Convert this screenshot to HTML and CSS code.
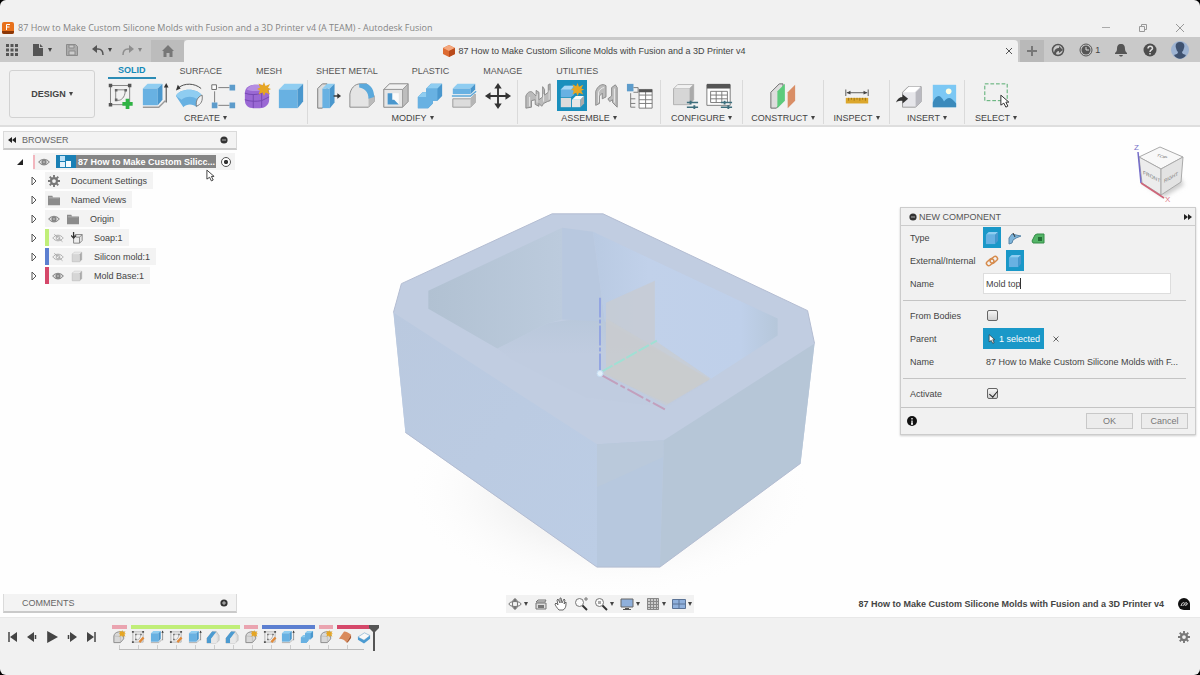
FILE: index.html
```html
<!DOCTYPE html>
<html lang="en">
<head>
<meta charset="utf-8">
<title>Autodesk Fusion</title>
<link rel="stylesheet" href="styles.css">
</head>
<body>
<svg class="defs" aria-hidden="true">
  <symbol id="cube" viewBox="0 0 30 30"><path d="m2 8 6-6h20l-6 6z" fill="#8fcdf1"/><path d="M2 8h20v20H2z" fill="#68b1e2"/><path d="m22 8 6-6v19l-6 7z" fill="#4a97cd"/></symbol>
  <symbol id="graycube" viewBox="0 0 30 30"><path d="m3 8 5-5h19l-5 5z" fill="#f1f1f1" stroke="#b0b0b0"/><path d="M3 8h19v19H3z" fill="#d6d6d6"/><path d="m22 8 5-5v18l-5 6z" fill="#aaa"/><path d="M3 8v19h19l5-6V3" fill="none" stroke="#aaa"/></symbol>
  <symbol id="sketch" viewBox="0 0 30 30"><path d="M4 4h22v22H4z" fill="none" stroke="#777"/><path d="M2 2h4v4H2zM24 2h4v4h-4zM2 24h4v4H2z" fill="#555"/><path d="M10 9v12h4c4-1 7-5 7-12z" fill="none" stroke="#777"/><path d="M9 8h3v3H9zM20 8h3v3h-3zM9 19h3v3H9z" fill="#666"/></symbol>
  <symbol id="extrude" viewBox="0 0 30 30"><path d="M2 27h17l7-7" fill="none" stroke="#999" stroke-width="1.500"/><path d="m2 7 5-5h16l-5 5z" fill="#8fcdf1"/><path d="M2 7h16v18H2z" fill="#68b1e2"/><path d="m18 7 5-5v17l-5 6z" fill="#4a97cd"/><path d="M27 22V4" stroke="#333"/><path d="m27 1 2.500 5h-5z" fill="#333"/></symbol>
  <symbol id="star" viewBox="0 0 14 14"><path d="m7 0 1.500 4L13 2l-2 4 3 1-3 1.500 2 4-4.500-2L7 14l-1.500-3.500-4 2 1.500-4-3-1.500 3-1.500L1.500 1.500l4 2z" fill="#e6a623"/></symbol>
  <symbol id="combine" viewBox="0 0 30 30"><path d="m11 7 5-5h12v13l-5 5h-5v3l-5 5H2V16l5-5h4z" fill="#4a97cd"/><path d="M11 7h12v13h-5v3l-5 5H2V16h9z" fill="#68b1e2"/><path d="m11 7 5-5h12l-5 5zm-9 9 5-5h4v5z" fill="#8fcdf1"/></symbol>
  <symbol id="newcomp" viewBox="0 0 30 30"><path d="M4 13c1-5 4-8 10-9h11v15l-7 8H4z" fill="#d8d8d8" stroke="#888" stroke-width="2"/><path d="m4 13 14 1v13m0-13 7-8" fill="none" stroke="#aaa"/><use href="#star" x="14" y="0" width="16" height="16"/></symbol>
  <symbol id="fillet" viewBox="0 0 30 30"><path d="M2 27V13C3 7 7 2 13 2h7l8 13v6l-6 6z" fill="#e4e4e4" stroke="#888"/><path d="m22 27 6-6v-7l-6 3z" fill="#bbb"/><path d="M12 2h8c5 2 8 7 8 14l-6 2C22 11 18 7 12 6z" fill="#5aa9dc"/></symbol>
  <symbol id="eye" viewBox="0 0 16 12"><path d="M1 6c4-5 10-5 14 0-4 5-10 5-14 0z" fill="#eee" stroke="#8a8a8a" stroke-width="1.500"/><circle cx="8" cy="6" r="3.500" fill="#858585"/><circle cx="8" cy="6" r="1" fill="#ddd"/></symbol>
  <symbol id="eyeoff" viewBox="0 0 16 12"><path d="M1 6c4-5 10-5 14 0-4 5-10 5-14 0z" fill="none" stroke="#999"/><circle cx="8" cy="6" r="2.500" fill="none" stroke="#999"/><path d="m3 1 11 10" stroke="#999"/></symbol>
  <symbol id="folder" viewBox="0 0 14 12"><path d="M0 1h5l1 2h8v9H0z" fill="#8c8c8c"/><path d="M1 3.500h12" stroke="#bbb"/></symbol>
  <symbol id="gear" viewBox="0 0 16 16"><circle cx="8" cy="8" r="4" fill="none" stroke="#777" stroke-width="3"/><path d="M8 0v3M8 13v3M0 8h3M13 8h3M2.300 2.300l2.200 2.200M11.500 11.500l2.200 2.200M2.300 13.700l2.200-2.200M11.500 4.500l2.200-2.200" stroke="#777" stroke-width="2.500"/></symbol>
  <symbol id="cursor" viewBox="0 0 10 14"><path d="M1 1v10l3-2 2 4 2-1-2-4h3z" fill="#fff" stroke="#333"/></symbol>
  <symbol id="minus" viewBox="0 0 10 10"><circle cx="5" cy="5" r="4.500" fill="#333"/><path d="M2.500 5h5" stroke="#ccc"/></symbol>
  <symbol id="tri" viewBox="0 0 8 10"><path d="M2 1v8l4-4z" fill="#fff" stroke="#555"/></symbol>
  <symbol id="rewind" viewBox="0 0 8 6"><path d="M4 0v6L0 3zM8 0v6L4 3z" fill="#222"/></symbol>
</svg>

<div class="app">
  <header class="titlebar">
    <svg class="i12" viewBox="0 0 12 12"><rect width="12" height="12" rx="2" fill="#e8711c"/><path d="M0 9h12v1a2 2 0 0 1-2 2H2a2 2 0 0 1-2-2z" fill="#8a3708"/><path d="M4.500 8V2.500H8M4.500 5h3" stroke="#fff" fill="none"/></svg>
    <span class="window-title">87 How to Make Custom Silicone Molds with Fusion and a 3D Printer v4 (A TEAM) - Autodesk Fusion</span>
    <div class="window-buttons">
      <button aria-label="Minimize"><svg class="i10" viewBox="0 0 10 10"><path d="M1 4.500h8" stroke="#aaa"/></svg></button>
      <button aria-label="Restore"><svg class="i10" viewBox="0 0 10 10"><path d="M1.500 3.500h5v5h-5zM3.500 3V1.500h5v5H7" fill="none" stroke="#999"/></svg></button>
      <button aria-label="Close window"><svg class="i10" viewBox="0 0 10 10"><path d="m1 1 8 8m0-8L1 9" stroke="#999"/></svg></button>
    </div>
  </header>

  <div class="tabbar">
    <div class="quick">
      <button aria-label="Data panel"><svg class="i12" viewBox="0 0 12 12"><path d="M0 0h3v3H0zM4.500 0h3v3h-3zM9 0h3v3H9zM0 4.500h3v3H0zM4.500 4.500h3v3h-3zM9 4.500h3v3H9zM0 9h3v3H0zM4.500 9h3v3h-3zM9 9h3v3H9z" fill="#555"/></svg></button>
      <button aria-label="File"><svg class="i12" viewBox="0 0 12 12"><path d="M1 0h6v4h4v8H1z" fill="#555"/><path d="m8 0 3 3H8z" fill="#555"/></svg><i class="arrow"></i></button>
      <button aria-label="Save"><svg class="i12" viewBox="0 0 12 12"><path d="M.5.5h9l2 2v9H.5z" fill="#aaa" stroke="#8b8b8b"/><path d="M3 1h5v3H3zM3 7h6v4H3z" fill="#ccc" stroke="#8b8b8b"/></svg></button>
      <button aria-label="Undo"><svg class="i12" viewBox="0 0 12 12"><path d="M11 11c0-4-2-6-5-6H3" fill="none" stroke="#555" stroke-width="1.500"/><path d="M5 1v8L0 5z" fill="#555"/></svg><i class="arrow"></i></button>
      <button class="faded" aria-label="Redo"><svg class="i12" viewBox="0 0 12 12"><path d="M1 11c0-4 2-6 5-6h3" fill="none" stroke="#555" stroke-width="1.500"/><path d="M7 1v8l5-4z" fill="#555"/></svg><i class="arrow"></i></button>
    </div>
    <button class="home" aria-label="Home"><svg class="i12" viewBox="0 0 12 12"><path d="m6 0 6 6h-1.500v6h-3V8h-3v4h-3V6H0z" fill="#777"/></svg></button>
    <div class="file-tab">
      <span class="file-name"><svg class="i12" viewBox="0 0 12 12"><path d="m6 0 6 3v6l-6 3-6-3V3z" fill="#dd6b32"/><path d="m6 0 6 3-6 3-6-3z" fill="#f4a77d"/><path d="m6 6 6-3v6l-6 3z" fill="#b94b1c"/></svg>87 How to Make Custom Silicone Molds with Fusion and a 3D Printer v4</span>
      <button aria-label="Close tab"><svg class="i8" viewBox="0 0 8 8"><path d="m1 1 6 6m0-6L1 7" stroke="#555"/></svg></button>
    </div>
    <button class="new-tab" aria-label="New tab"><svg class="i10" viewBox="0 0 10 10"><path d="M5 0v10M0 5h10" stroke="#777" stroke-width="2"/></svg></button>
    <div class="account">
      <button aria-label="Extensions"><svg class="i14" viewBox="0 0 14 14"><circle cx="7" cy="7" r="5.500" fill="none" stroke="#555" stroke-width="1.500"/><path d="M3 11c0-4 2-6 5-6V3l4 4-4 3V8c-2 0-3 1-3 4z" fill="#555"/></svg></button>
      <button class="jobs" aria-label="Job status"><svg class="i14" viewBox="0 0 14 14"><circle cx="7" cy="7" r="6" fill="none" stroke="#555"/><circle cx="7" cy="7" r="4.500" fill="#555"/><path d="M7 4v3h3" fill="none" stroke="#ddd"/></svg>1</button>
      <button aria-label="Notifications"><svg class="i14" viewBox="0 0 14 14"><path d="M7 1c3 0 4 2 4 5 0 2 1 3 2 4v1H1v-1c1-1 2-2 2-4 0-3 1-5 4-5zM5 12h4c-1 2-3 2-4 0z" fill="#555"/></svg></button>
      <button aria-label="Help"><svg class="i14" viewBox="0 0 14 14"><circle cx="7" cy="7" r="6.500" fill="#4d4d4d"/><path d="M5 5.500c0-3 4.500-3 4.500 0C9.500 7 7 7 7 9m0 1v1.500" fill="none" stroke="#ddd" stroke-width="1.500"/></svg></button>
      <button aria-label="Profile"><svg class="i18" viewBox="0 0 18 18"><circle cx="9" cy="9" r="9" fill="#9db3d2"/><path d="M9 1c4 0 5 3 4 6-.5 2-1 3-2 4 0 2 2 2 4 3-3 5-9 5-12 0 2-1 4-1 4-3-1-1-1.500-2-2-4C4 4 5 1 9 1z" fill="#3f5270"/></svg></button>
    </div>
  </div>

  <div class="ribbon">
    <button class="workspace">DESIGN <i class="arrow"></i></button>
    <div class="tools">
      <nav class="tabs">
        <button class="on">SOLID</button><button>SURFACE</button><button>MESH</button><button>SHEET METAL</button><button>PLASTIC</button><button>MANAGE</button><button>UTILITIES</button>
      </nav>
      <div class="groups">
        <section class="group">
          <div class="icons">
            <button aria-label="Create Sketch"><svg viewBox="0 0 30 30"><use href="#sketch" width="28" height="28"/><path d="M22 18v11M16.500 23.500h11" stroke="#2fb344" stroke-width="4"/></svg></button>
            <button aria-label="Extrude"><svg><use href="#extrude"/></svg></button>
            <button aria-label="Revolve"><svg viewBox="0 0 30 30"><path d="M1 15c4-9 24-9 28 0l-6 12c-3-4-11-4-14 0z" fill="#68b1e2"/><path d="M1 15c4-9 24-9 28 0l-6 3c-4-3-12-3-16 1z" fill="#8fcdf1"/><path d="M29 14c1 6-1 10-6 12-1-5 1-10 6-12z" fill="#f2f2f2" stroke="#777"/><path d="M4 6c6-5 17-5 24 1" fill="none" stroke="#444"/><path d="m1 9 2-6 3 4z" fill="#333"/></svg></button>
            <button aria-label="Pattern"><svg viewBox="0 0 30 30"><path d="M10 6h12M6 10v12M10 25h12" stroke="#777"/><path d="M3 3h5v5H3z" fill="#fff" stroke="#666"/><path d="M22 3h6v6h-6zM3 22h6v6H3zM22 22h6v6h-6z" fill="#5d9ccb"/></svg></button>
            <button aria-label="Create Form"><svg viewBox="0 0 30 30"><path d="M2 12c0-5 4-9 10-9h8c6 1 8 4 8 9v7c0 6-5 9-10 9h-6C5 28 2 25 2 19z" fill="#9a68d4"/><path d="M4 8c3-4 6-5 11-5l8 1-4 5c-5 1-11 1-15-1z" fill="#b58ee2"/><path d="M2 12c6 2 12 2 18 0l8-5M2 19c6 2 12 2 18 1l8-4M11 13v15M20 12v15" fill="none" stroke="#7446b0"/><use href="#star" x="15" y="0" width="15" height="15"/></svg></button>
            <button aria-label="Box"><svg><use href="#cube"/></svg></button>
          </div>
          <button class="label">CREATE <i class="arrow"></i></button>
        </section>
        <section class="group">
          <div class="icons">
            <button aria-label="Press Pull"><svg viewBox="0 0 30 30"><path d="m4 7 5-5h5v20l-5 6H4z" fill="#ddd" stroke="#777"/><path d="M9 7h8v21H9z" fill="#68b1e2"/><path d="m9 7 5-5h8l-5 5z" fill="#8fcdf1"/><path d="m17 7 5-5v20l-5 6z" fill="#4a97cd"/><path d="M21 15h5" stroke="#333" stroke-width="1.500"/><path d="m25 12 4 3-4 3z" fill="#333"/></svg></button>
            <button aria-label="Fillet"><svg><use href="#fillet"/></svg></button>
            <button aria-label="Shell"><svg viewBox="0 0 30 30"><path d="m2 8 6-6h20v19l-6 6H2z" fill="#bdbdbd" stroke="#888"/><path d="m2 8 6-6h20l-6 6z" fill="#f1f1f1" stroke="#999"/><path d="M2 8h20v19H2z" fill="#e6e6e6" stroke="#999"/><path d="M6 12h12v12H6z" fill="#fafafa"/><path d="M6 12v12h12l-5-5h-2v-7z" fill="#4a97cd"/></svg></button>
            <button aria-label="Combine"><svg><use href="#combine"/></svg></button>
            <button aria-label="Split Body"><svg viewBox="0 0 30 30"><path d="m3 7 5-5h19l-5 5z" fill="#8fcdf1"/><path d="M3 7h19v6H3z" fill="#68b1e2"/><path d="m22 7 5-5v6l-5 5z" fill="#4a97cd"/><path d="M2 15h20l6-5" stroke="#5aa6d8" stroke-width="1.500" fill="none"/><path d="M3 18h19l5-5v9l-5 5H3z" fill="#dcdcdc" stroke="#999"/><path d="m22 18 5-5v9l-5 5z" fill="#b5b5b5"/></svg></button>
            <button aria-label="Move"><svg viewBox="0 0 30 30"><path d="M15 4v22M4 15h22" stroke="#333" stroke-width="2"/><path d="m15 1 4 6h-8zM15 29l4-6h-8zM1 15l6-4v8zM29 15l-6-4v8z" fill="#333"/></svg></button>
          </div>
          <button class="label">MODIFY <i class="arrow"></i></button>
        </section>
        <section class="group">
          <div class="icons">
            <button aria-label="Joint"><svg viewBox="0 0 30 30"><path d="M2 28V15c2-5 6-6 8-3l3 3V9l3 2v8l4-3V5l2 3v6l4-3V3l2-1v18l-3 1-4 2-2 3-3-3v3l-4-2v-5l-4 1v7z" fill="#bbb" stroke="#888"/><path d="M6 26V16m8-3v9m7-9v8m6-12v10" stroke="#e8e8e8"/></svg></button>
            <button class="active" aria-label="New Component"><svg viewBox="0 0 30 30"><path d="m3 8 4-4h10v10l-3 2H3z" fill="#68b1e2"/><path d="m3 8 4-4h10l-3 4z" fill="#a8d7f5"/><path d="M3 17h11v10H3z" fill="#dcdcdc"/><path d="M15 19h9v8h-9z" fill="#e6e6e6"/><path d="m15 19 4-4h9l-4 4z" fill="#fafafa"/><path d="m24 19 4-4v8l-4 4z" fill="#aaa"/><use href="#star" x="14" y="1" width="14" height="14"/></svg></button>
            <button aria-label="As-built Joint"><svg viewBox="0 0 30 30"><path d="M4 25V10c2-6 7-9 11-6v12l-4 2v-6l-3 3v8zM17 18l4-3V6l4-3 2 3v21l-5-5v-3l-3 2z" fill="#bbb" stroke="#888"/><path d="M7 22V11c1-3 4-5 6-5m11 1v15" fill="none" stroke="#eee"/></svg></button>
            <button aria-label="Bill of materials"><svg viewBox="0 0 30 30"><path d="M1 2h7v8H1z" fill="#5d9ccb"/><path d="M8 6h5v5H8M5 12v15h5m-5-9h5m-5 5h5" fill="none" stroke="#777"/><path d="M14 8h14v20H14zM14 14h14M14 19h14M14 23h14M21 8v20" fill="#fff" stroke="#777"/><path d="M14 8h14v3H14z" fill="#555"/></svg></button>
          </div>
          <button class="label">ASSEMBLE <i class="arrow"></i></button>
        </section>
        <section class="group">
          <div class="icons">
            <button aria-label="Configure"><svg viewBox="0 0 30 30"><use href="#graycube" width="27" height="27"/><path d="M17 22h12m-12 5h12" stroke="#3c6e7c" stroke-width="1.500"/><path d="M21 20v4m4 1v4" stroke="#3c6e7c" stroke-width="2"/></svg></button>
            <button aria-label="Configuration table"><svg viewBox="0 0 30 30"><path d="M2 3h25v22H2z" fill="#fff" stroke="#777"/><path d="M2 2h25v5H2z" fill="#555"/><path d="M6 10h18v12H6zM6 14h18M6 18h18M12 10v12M18 10v12" fill="none" stroke="#777"/><path d="M17 22h12m-12 5h12" stroke="#3c6e7c" stroke-width="1.500"/><path d="M21 20v4m4 1v4" stroke="#3c6e7c" stroke-width="2"/></svg></button>
          </div>
          <button class="label">CONFIGURE <i class="arrow"></i></button>
        </section>
        <section class="group">
          <div class="icons"><button aria-label="Offset Plane"><svg viewBox="0 0 30 30"><path d="m2 11 9-9h4v18l-7 8H2z" fill="#ddd" stroke="#666"/><path d="m9 10 8-8v18l-8 8z" fill="#5ccb7c"/><path d="m20 11 8-8v17l-8 8z" fill="#d98e66"/></svg></button></div>
          <button class="label">CONSTRUCT <i class="arrow"></i></button>
        </section>
        <section class="group">
          <div class="icons"><button aria-label="Measure"><svg viewBox="0 0 30 30"><path d="M3 8v7M27 8v7M4 11.500h22" stroke="#555"/><path d="m4 11.500 4-2v4zM26 11.500l-4-2v4z" fill="#444"/><path d="M3 17h24v6H3z" fill="#dca72c"/><path d="M6 17v3m3-3v2m3-2v3m3-3v2m3-2v3m3-3v2m3-2v3" stroke="#9c7416"/></svg></button></div>
          <button class="label">INSPECT <i class="arrow"></i></button>
        </section>
        <section class="group">
          <div class="icons">
            <button aria-label="Insert Derive"><svg viewBox="0 0 30 30"><path d="m7 11 6-6h14v16l-6 6H7z" fill="#e6e6ea" stroke="#999"/><path d="m21 11 6-6v16l-6 6z" fill="#b9b9c0"/><path d="m8 11 6-6h12l-6 6z" fill="#fff"/><path d="M0 22c1-4 4-6 7-6v-3l6 5-6 5v-3c-3 0-5 0-7 2z" fill="#333"/></svg></button>
            <button aria-label="Insert image"><svg viewBox="0 0 30 30"><path d="M3 3h25v24H3z" fill="#7cc8f4"/><circle cx="20" cy="10" r="3" fill="#fffde0"/><path d="M3 22c4-9 8-9 12-1 4-6 8-5 13 2v4H3z" fill="#3b8abb"/></svg></button>
          </div>
          <button class="label">INSERT <i class="arrow"></i></button>
        </section>
        <section class="group">
          <div class="icons"><button aria-label="Select"><svg viewBox="0 0 30 30"><path d="M3 2h24v18H3z" fill="none" stroke="#4aa866" stroke-dasharray="4 2"/><use href="#cursor" x="19" y="13" width="11" height="15"/></svg></button></div>
          <button class="label">SELECT <i class="arrow"></i></button>
        </section>
      </div>
    </div>
  </div>

  <main class="canvas">
    <svg class="model" viewBox="0 126 1200 491" aria-hidden="true">
      <defs>
        <linearGradient id="gl" x1="0" y1="0" x2="1" y2="1"><stop offset="0" stop-color="#bac9df"/><stop offset="1" stop-color="#bccde5"/></linearGradient>
        <linearGradient id="gw" x1="0" y1="0" x2="1" y2="0"><stop offset="0" stop-color="#b1c1d2"/><stop offset="1" stop-color="#bccbdd"/></linearGradient>
        <linearGradient id="gr" x1="0" y1="0" x2="1" y2="0"><stop offset="0" stop-color="#b9cae2"/><stop offset=".3" stop-color="#c1d1ea"/><stop offset=".8" stop-color="#bfd0ea"/><stop offset="1" stop-color="#b6c7da"/></linearGradient>
        <linearGradient id="gf" x1="0" y1="0" x2="0" y2="1"><stop offset="0" stop-color="#b9c8db"/><stop offset=".4" stop-color="#c0cce0"/></linearGradient>
        <radialGradient id="sh"><stop offset=".5" stop-color="#f4f4f4"/><stop offset="1" stop-color="#fff" stop-opacity="0"/></radialGradient>
      </defs>
      <ellipse cx="610" cy="490" rx="210" ry="110" fill="url(#sh)"/>
      <path d="M552 213h51l205 97 7 33-14 120-141 104h-63L405 432l-12-120 8-29z" fill="#c1cde1"/>
      <path d="m393 312 204 132v123L405 432z" fill="url(#gl)"/>
      <path d="m597 444 67-4-4 127h-63z" fill="#b7c8de"/>
      <path d="m597 444 67-4-1 17-66 30z" fill="#bac9db"/>
      <path d="m664 440 151-97-14 120-141 104z" fill="#b6c6d7"/>
      <path d="m428 290 134-63 31 4 185 87v17l-68 45-44 27-80-10-73-37-85-52z" fill="#c1cde1"/>
      <path d="m497 348 50-25c16-4 36-5 57-4l106 61-44 27-80-10-73-37z" fill="url(#gf)"/>
      <path d="m428 290 134-63v92l-15 4-50 25-69-40z" fill="url(#gw)"/>
      <path d="m562 227 31 4 12 90-43-2z" fill="#b8c8df"/>
      <path d="m593 231 185 87v17l-68 44-105-58z" fill="url(#gr)"/>
      <path d="m606 302 49-22v60l-49 32z" fill="#c7cbd4" opacity=".85"/>
      <path d="m606 318 104 61-44 26-60-32z" fill="#cacccd" opacity=".6"/>
      <path d="m602 373 53-33 56 38-43 25z" fill="#cbccca" opacity=".6"/>
      <path d="m552 213-151 70-8 29M603 213l205 97 7 33M405 432l192 135h63l141-104M552 213h51" fill="none" stroke="#b4bdd2"/>
      <path d="M600 297v73" stroke="#93a5e2" stroke-width="2" stroke-dasharray="20 2 4 2"/>
      <path d="m602 371 55-31" stroke="#a0e0d4" stroke-width="2" stroke-dasharray="12 2"/>
      <path d="m602 375 63 34" stroke="#c2a0bd" stroke-width="2" stroke-dasharray="18 3 5 3"/>
      <circle cx="600" cy="373" r="3" fill="#e2effa" stroke="#c4dcf2"/>
    </svg>

    <div class="workarea">
      <aside class="browser">
        <div class="panel-head"><button aria-label="Collapse browser"><svg class="i8" ><use href="#rewind"/></svg></button><span>BROWSER</span><button aria-label="Hide browser"><svg class="i8"><use href="#minus"/></svg></button></div>
        <ul class="tree">
          <li class="root"><svg class="i8" viewBox="0 0 8 8"><path d="M7 1v6H1z" fill="#222"/></svg>
            <div class="node"><b class="bar pink"></b><svg class="i12"><use href="#eye"/></svg>
              <span class="picked"><svg class="asm" viewBox="0 0 20 13"><path d="M4 1h5v5H4z" fill="#bfe2f8"/><path d="M4 7h5v5H4z" fill="#e2f1fb"/><path d="M10 6h5v6h-5z" fill="#f4fafe"/></svg><strong>87 How to Make Custom Silicc...</strong></span>
              <input type="radio" checked aria-label="Activate component">
              <svg class="pointer"><use href="#cursor"/></svg></div></li>
          <li><svg class="i10"><use href="#tri"/></svg><div class="node plain"><svg class="i12"><use href="#gear"/></svg><span>Document Settings</span></div></li>
          <li><svg class="i10"><use href="#tri"/></svg><div class="node plain"><svg class="i12"><use href="#folder"/></svg><span>Named Views</span></div></li>
          <li><svg class="i10"><use href="#tri"/></svg><div class="node plain"><svg class="i12"><use href="#eye"/></svg><svg class="i12"><use href="#folder"/></svg><span>Origin</span></div></li>
          <li><svg class="i10"><use href="#tri"/></svg><div class="node"><b class="bar lime"></b><svg class="i12"><use href="#eyeoff"/></svg><svg class="i12" viewBox="0 0 14 14"><path d="m3 5 2-2h8v7l-3 3H3zM10 6v7m0-7 3-3M6 6h4" fill="#eee" stroke="#777"/><path d="M3 0v7M0 4l3 3 3-3" fill="none" stroke="#333" stroke-width="1.500"/></svg><span>Soap:1</span></div></li>
          <li><svg class="i10"><use href="#tri"/></svg><div class="node"><b class="bar blue"></b><svg class="i12"><use href="#eyeoff"/></svg><svg class="i12"><use href="#graycube"/></svg><span>Silicon mold:1</span></div></li>
          <li><svg class="i10"><use href="#tri"/></svg><div class="node"><b class="bar red"></b><svg class="i12"><use href="#eye"/></svg><svg class="i12"><use href="#graycube"/></svg><span>Mold Base:1</span></div></li>
        </ul>
      </aside>

      <div class="side">
        <svg class="viewcube" viewBox="0 0 60 66"><defs><filter id="soft"><feGaussianBlur stdDeviation="2"/></filter></defs><path d="m14 46 22 14 20-12-4-8z" fill="#ccc" filter="url(#soft)"/><path d="m11 20 21-10 23 10-22 12z" fill="#f8f8f8" stroke="#aaa"/><path d="m11 20 22 12v26L14 46z" fill="#ececec" stroke="#aaa"/><path d="m33 32 22-12-2 25-20 13z" fill="#e3e3e3" stroke="#aaa"/><path d="m10 15 3 31" stroke="#746cc9" stroke-width="1.500"/><path d="m13 46 23 15" stroke="#cf6478" stroke-width="1.500"/><text x="6" y="13" fill="#7771c8">Z</text><text x="37" y="65" fill="#e0788a">X</text><text class="face" transform="matrix(1 .5 0 1 15 37)">FRONT</text><text class="face" transform="matrix(.9 -.5 0 1 36 46)">RIGHT</text><text class="face" transform="matrix(1 .3 -.5 .6 28 19)">TOP</text></svg>
        <form class="dialog">
          <div class="dialog-head"><svg class="i8"><use href="#minus"/></svg><span>NEW COMPONENT</span><button type="button" aria-label="Dock"><svg class="i8 flip"><use href="#rewind"/></svg></button></div>
          <fieldset>
            <div class="row"><span>Type</span><div class="choices"><button type="button" class="choice on" aria-label="Standard"><svg class="i14"><use href="#cube"/></svg></button><button type="button" class="choice" aria-label="Sheet metal"><svg class="i14" viewBox="0 0 14 14"><path d="M1 13V7l3-4 4 1 5 1-5 2-3 2-1 3z" fill="#7db4da" stroke="#5a86a8"/><path d="m5 2 2 4" stroke="#333"/></svg></button><button type="button" class="choice" aria-label="Electronics"><svg class="i14" viewBox="0 0 14 14"><path d="M1 10 4 4l2-1h7v9H2z" fill="#54b567" stroke="#348d48"/><path d="M7 6h4v4H7z" fill="#246f36"/></svg></button></div></div>
            <div class="row"><span>External/Internal</span><div class="choices"><button type="button" class="choice" aria-label="External"><svg class="i14" viewBox="0 0 14 14"><g fill="none" stroke="#d68b4c" stroke-width="1.500"><rect x="1" y="6" width="8" height="4.500" rx="2" transform="rotate(-40 5 8)"/><rect x="5" y="3.500" width="8" height="4.500" rx="2" transform="rotate(-40 9 6)"/></g></svg></button><button type="button" class="choice on" aria-label="Internal"><svg class="i14"><use href="#cube"/></svg></button></div></div>
            <div class="row"><label for="cname">Name</label><div class="field"><input id="cname" type="text" value="Mold top"></div></div>
          </fieldset>
          <fieldset>
            <div class="row"><label for="bodies">From Bodies</label><input id="bodies" type="checkbox"></div>
            <div class="row"><span>Parent</span><div class="choices"><button type="button" class="selected"><svg class="i10"><use href="#cursor"/></svg>1 selected</button><button type="button" class="clear" aria-label="Clear selection"><svg class="i8" viewBox="0 0 8 8"><path d="m1.500 1.500 5 5m0-5-5 5" stroke="#666"/></svg></button></div></div>
            <div class="row"><span>Name</span><span class="value">87 How to Make Custom Silicone Molds with F...</span></div>
          </fieldset>
          <fieldset>
            <div class="row"><label for="activate">Activate</label><input id="activate" type="checkbox" checked></div>
          </fieldset>
          <div class="dialog-foot"><svg class="i10" viewBox="0 0 10 10"><circle cx="5" cy="5" r="5" fill="#111"/><path d="M5 2v1.500M5 4.500V8M4 8h2" stroke="#fff" stroke-width="1.300"/></svg><button type="submit">OK</button><button type="button">Cancel</button></div>
        </form>
      </div>
    </div>

    <div class="bottom">
      <div class="panel-head comments"><span>COMMENTS</span><button aria-label="Show comments"><svg class="i8" viewBox="0 0 10 10"><circle cx="5" cy="5" r="4.500" fill="#333"/><path d="M2.500 5h5M5 2.500v5" stroke="#ddd"/></svg></button></div>
      <div class="navbar">
        <button aria-label="Orbit"><svg class="i14" viewBox="0 0 14 14"><ellipse cx="7" cy="7" rx="6" ry="2.500" fill="none" stroke="#777"/><ellipse cx="7" cy="7" rx="2.500" ry="5" fill="none" stroke="#777"/><path d="m7 1 2 3H5zM7 13l2-3H5z" fill="#777"/></svg><i class="arrow"></i></button>
        <button aria-label="Look at"><svg class="i14" viewBox="0 0 14 14"><path d="M2 6h10v6H2zM2 5l2-2h8l-1 2z" fill="#ddd" stroke="#777"/><path d="M4 8h6v3H4z" fill="#777"/></svg></button>
        <button aria-label="Pan"><svg class="i14" viewBox="0 0 14 14"><path d="M5 13C3 11 1 8 1 7l1-1 2 2-1-5 1-1 2 4V1h1l1 5 2-4 1 1-1 4 2-2v2c0 3-1 5-3 6z" fill="#fff" stroke="#666"/></svg></button>
        <button aria-label="Zoom"><svg class="i14" viewBox="0 0 14 14"><circle cx="5.500" cy="5.500" r="4" fill="#fafafa" stroke="#777"/><path d="m8.500 8.500 4.500 4.500" stroke="#333" stroke-width="2"/><path d="M10 2h4M12 0v4" stroke="#777"/></svg></button>
        <button aria-label="Fit"><svg class="i14" viewBox="0 0 14 14"><circle cx="5.500" cy="5.500" r="4" fill="#fafafa" stroke="#777"/><path d="m8.500 8.500 4.500 4.500" stroke="#333" stroke-width="2"/><path d="M4 4h3v3H4z" fill="#aaa"/></svg><i class="arrow"></i></button>
        <button aria-label="Display settings"><svg class="i14" viewBox="0 0 14 14"><path d="M1 2h12v8H1z" fill="#8fb0dc" stroke="#666"/><path d="M5 11h4v1h2v1H3v-1h2z" fill="#555"/></svg><i class="arrow"></i></button>
        <button aria-label="Grid and snaps"><svg class="i14" viewBox="0 0 14 14"><path d="M1 1h12v12H1z" fill="#ccc"/><path d="M1.500 1.500h11v11h-11zM1 4.500h12M1 7.500h12M1 10.500h12M4.500 1v12M7.500 1v12M10.500 1v12" fill="none" stroke="#888"/></svg><i class="arrow"></i></button>
        <button aria-label="Viewports"><svg class="i14" viewBox="0 0 14 14"><path d="M.5 2.500h13v9H.5zM7 2v10M1 7h12" fill="#8fb0dc" stroke="#5b7396"/></svg><i class="arrow"></i></button>
      </div>
      <div class="doc-label"><strong>87 How to Make Custom Silicone Molds with Fusion and a 3D Printer v4</strong><svg class="i12" viewBox="0 0 12 12"><path d="M6 0c3 0 6 3 6 6v6H6a6 6 0 0 1 0-12z" fill="#111"/><path d="M3 8c1-3 2-4 3-3s2-1 3 0-1 3-2 2-2 0-2 1" fill="none" stroke="#eee"/></svg></div>
    </div>
  </main>

  <footer class="timeline">
    <div class="playback">
      <button aria-label="Go to start"><svg class="i10" viewBox="0 0 10 10"><path d="M1 0v10" stroke="#444" stroke-width="1.500"/><path d="M9 0v10L2 5z" fill="#444"/></svg></button>
      <button aria-label="Step back"><svg class="i10" viewBox="0 0 10 10"><path d="M7 0v10L0 5z" fill="#444"/><path d="M8.500 3v4" stroke="#444" stroke-width="1.500"/></svg></button>
      <button aria-label="Play"><svg class="i12" viewBox="0 0 10 10"><path d="M1 0v10l9-5z" fill="#444"/></svg></button>
      <button aria-label="Step forward"><svg class="i10" viewBox="0 0 10 10"><path d="M3 0v10l7-5z" fill="#444"/><path d="M1.500 3v4" stroke="#444" stroke-width="1.500"/></svg></button>
      <button aria-label="Go to end"><svg class="i10" viewBox="0 0 10 10"><path d="M9 0v10" stroke="#444" stroke-width="1.500"/><path d="M1 0v10l7-5z" fill="#444"/></svg></button>
    </div>
    <div class="history">
      <b class="rose"></b><b class="lime six"></b><b class="rose"></b><b class="blue three"></b><b class="rose"></b><b class="red two"></b>
      <button aria-label="Component"><svg class="i14"><use href="#newcomp"/></svg></button>
      <button aria-label="Sketch"><svg class="i14" viewBox="0 0 30 30"><use href="#sketch"/><path d="m18 26 9-10" stroke="#e08a3a" stroke-width="5"/></svg></button>
      <button aria-label="Extrude"><svg class="i14"><use href="#extrude"/></svg></button>
      <button aria-label="Sketch"><svg class="i14" viewBox="0 0 30 30"><use href="#sketch"/><path d="m18 26 9-10" stroke="#e08a3a" stroke-width="5"/></svg></button>
      <button aria-label="Extrude"><svg class="i14"><use href="#extrude"/></svg></button>
      <button aria-label="Chamfer"><svg class="i14" viewBox="0 0 30 30"><path d="M2 28V18L14 3h8l6 9v10l-6 6z" fill="#ddd" stroke="#999"/><path d="M2 17 13 3l9 1-11 15v9H2z" fill="#4c9bd1"/><path d="M11 19 20 8l3 5v15H11z" fill="#e8e8e8"/></svg></button>
      <button aria-label="Chamfer"><svg class="i14" viewBox="0 0 30 30"><path d="M2 28V18L14 3h8l6 9v10l-6 6z" fill="#ddd" stroke="#999"/><path d="M2 17 13 3l9 1-11 15v9H2z" fill="#4c9bd1"/><path d="M11 19 20 8l3 5v15H11z" fill="#e8e8e8"/></svg></button>
      <button aria-label="Component"><svg class="i14"><use href="#newcomp"/></svg></button>
      <button aria-label="Sketch"><svg class="i14" viewBox="0 0 30 30"><use href="#sketch"/><path d="m18 26 9-10" stroke="#e08a3a" stroke-width="5"/></svg></button>
      <button aria-label="Extrude"><svg class="i14"><use href="#extrude"/></svg></button>
      <button aria-label="Combine"><svg class="i14"><use href="#combine"/></svg></button>
      <button aria-label="Component"><svg class="i14"><use href="#newcomp"/></svg></button>
      <button aria-label="Plane"><svg class="i14" viewBox="0 0 30 30"><path d="M2 19 13 3c6 0 10 3 15 7l-10 17c-3-5-8-8-16-8z" fill="#d98a5c"/><path d="m18 27 10-17v7l-7 10z" fill="#a95a30"/></svg></button>
      <button aria-label="Shell"><svg class="i14" viewBox="0 0 30 30"><path d="m2 15 14-9 12 6-13 10z" fill="#f8f8f8" stroke="#4c8fc0"/><path d="m2 15 13 7 13-10v7L15 29 2 21z" fill="#4c9bd1"/></svg></button>
      <svg class="marker" viewBox="0 0 10 26"><path d="M0 0h10v3L6 7v19H4V7L0 3z" fill="#555"/></svg>
    </div>
    <button class="settings" aria-label="Timeline settings"><svg class="i12"><use href="#gear"/></svg></button>
  </footer>
</div>
</body>
</html>
```

FILE: styles.css
```css
* { box-sizing: border-box; }
html { background: #000; }
body { margin: 0; font: 9px/12px "Liberation Sans", Arial, sans-serif; color: #444; }
button, input { font: inherit; color: inherit; }
button { display: flex; align-items: center; justify-content: center; margin: 0; padding: 0; border: 0; background: none; white-space: nowrap; }
svg { display: block; flex: none; }
.defs { position: absolute; width: 0; height: 0; }
.i8 { width: 8px; height: 8px; }
.i10 { width: 10px; height: 10px; }
.i12 { width: 12px; height: 12px; }
.i14 { width: 14px; height: 14px; }
.i18 { width: 18px; height: 18px; }
.arrow { flex: none; border: 2px solid transparent; border-top: 4px solid #444; border-bottom: 0; margin-left: 3px; }

.app { display: flex; flex-direction: column; min-height: 100vh; background: #f1f1f1; border-radius: 6px; overflow: hidden; }

/* Title bar */
.titlebar { display: flex; align-items: center; gap: 4px; height: 37px; padding: 18px 15px 0 2px; }
.window-title { font: 9px/14px "Open Sans", "Noto Sans", sans-serif; color: #858585; white-space: nowrap; }
.window-buttons { display: flex; gap: 27px; margin-left: auto; }

/* Document tabs */
.tabbar { display: flex; height: 25px; padding-top: 3px; background: #c9c9c9; }
.quick { display: flex; align-items: center; gap: 14px; width: 151px; padding: 0 0 3px 6px; }
.quick button { gap: 1px; }
.quick .faded { margin-left: -4px; opacity: .5; }
.home { width: 33px; background: #bcbcbc; }
.file-tab { display: flex; flex: 1; align-items: center; padding-right: 5px; background: #f1f1f1; border-radius: 4px 4px 0 0; }
.file-name { display: flex; flex: 1; align-items: center; justify-content: center; gap: 3px; white-space: nowrap; }
.new-tab { width: 24px; margin-left: 2px; background: #b9b9b9; }
.account { display: flex; align-items: center; justify-content: space-between; width: 156px; padding: 0 11px 3px 7px; }
.jobs { gap: 2px; }

/* Ribbon */
.ribbon { display: flex; gap: 9px; height: 65px; padding: 1px 9px 0; border-bottom: 2px solid #dedede; }
.workspace { width: 86px; height: 48px; margin-top: 7px; border: 1px solid #d2d2d2; border-radius: 3px; font-weight: bold; }
.tabs { display: flex; gap: 14px; padding-left: 4px; }
.tabs button { height: 16px; padding: 0 10px; color: #555; }
.tabs .on { color: #1489b8; font-weight: bold; border-bottom: 2px solid #2c8cb5; }
.groups { display: grid; grid-template-columns: 204px 210px 143px 82px 81px 66px 75px 62px; }
.group { display: flex; flex-direction: column; align-items: center; border-right: 1px solid #dadada; margin-top: 1px; }
.group:last-child { border: 0; }
.icons { display: flex; gap: 4px; }
.icons button { width: 30px; height: 31px; }
.icons svg { width: 28px; height: 28px; }
.icons .active { background: #1a8fbd; }
.label { height: 13px; color: #444; }

/* Canvas */
.canvas { position: relative; display: flex; flex: 1; flex-direction: column; justify-content: space-between; background: #fefefe; }
.model { position: absolute; inset: 0; width: 100%; height: 100%; }
.workarea { position: relative; display: flex; justify-content: space-between; padding: 4px 4px 0 3px; }
.browser { width: 234px; }
.panel-head { display: flex; align-items: center; width: 234px; height: 19px; padding: 0 8px 0 4px; border: 1px solid #dadada; border-bottom: 2px solid #cacaca; background: #f3f3f3; color: #666; }
.panel-head span { flex: 1; padding-left: 6px; }
.tree { margin: 2px 0 0; padding: 0; list-style: none; }
.tree li { display: flex; align-items: center; gap: 6px; height: 19px; padding-left: 26px; }
.tree .root { gap: 9px; padding-left: 13px; }
.node { position: relative; display: flex; align-items: center; gap: 7px; height: 17px; padding-right: 6px; background: #f3f3f3; white-space: nowrap; }
.plain { padding-left: 3px; }
.node span { padding-left: 4px; }
.bar { width: 4px; height: 17px; margin-right: -4px; }
.root .node { gap: 4px; padding-right: 4px; }
.root .bar { width: 2px; height: 14px; margin-right: -1px; }
.pink { background: #f2b6be; }
.rose { background: #eaa4b0; }
.lime { background: #c0ee78; }
.blue { background: #5c7fd0; }
.red { background: #d5486a; }
.root .picked { display: flex; align-items: center; height: 13px; padding: 0; margin-left: 2px; background: #858585; color: #fff; }
.asm { width: 20px; height: 13px; background: #1a80b5; }
.picked strong { padding: 0 1px 0 2px; }
.root input { width: 10px; height: 10px; margin: 0 0 0 1px; appearance: none; border: 1px solid #555; border-radius: 50%; background: radial-gradient(#333 30%, #fff 45%); }
.pointer { position: absolute; right: 20px; top: 16px; width: 9px; height: 13px; }

/* View cube and dialog */
.side { display: flex; flex-direction: column; align-items: flex-end; width: 296px; }
.viewcube { width: 60px; height: 66px; margin: 6px 8px 4px 0; font-size: 8px; }
.face { font-size: 5px; fill: #777; }
.dialog { width: 100%; border: 1px solid #ccc; background: #f1f1f1; color: #444; box-shadow: 0 1px 2px #ccc; }
.dialog-head { display: flex; align-items: center; gap: 2px; height: 18px; padding: 0 3px 0 8px; border-bottom: 1px solid #ccc; color: #555; }
.dialog-head span { flex: 1; }
.flip { transform: scaleX(-1); }
fieldset { margin: 0 9px 0 2px; padding: 3px 0 5px 7px; border: 0; border-bottom: 1px solid #c4c4c4; }
fieldset:first-of-type { padding-top: 0; }
fieldset:last-of-type { margin: 0; padding: 3px 0 2px 9px; }
.row { display: grid; grid-template-columns: 73px 1fr; align-items: center; height: 23px; }
.choices { display: flex; gap: 5px; }
.choice { width: 18px; height: 21px; }
.choice.on, .selected { background: #1a98c8; }
.field { position: relative; margin-right: 15px; }
.field input { width: 100%; height: 21px; padding: 0 2px; border: 1px solid #ddd; border-radius: 0; background: #fff; outline: 0; }
.field::after { content: ""; position: absolute; left: 37px; top: 5px; width: 1px; height: 11px; background: #333; }
.row input[type="checkbox"] { width: 11px; height: 11px; margin: 0 0 0 4px; appearance: none; border: 1px solid #666; border-radius: 2px; background: linear-gradient(#f5f5f5, #d0d0d0); }
.row input[type="checkbox"]:checked::after { content: ""; display: block; width: 4px; height: 7px; margin-left: 3px; border: solid #222; border-width: 0 1px 1px 0; transform: rotate(40deg); }
.selected { gap: 2px; width: 61px; height: 21px; color: #fff; }
.clear { padding-left: 3px; }
.value { padding-left: 3px; white-space: nowrap; }
.dialog-foot { display: flex; align-items: center; gap: 8px; height: 26px; padding: 0 7px 0 6px; color: #777; }
.dialog-foot svg { margin-right: auto; }
.dialog-foot button { width: 47px; height: 16px; border: 1px solid #c8c8c8; background: #ececec; }

/* Canvas footer */
.bottom { position: relative; display: grid; grid-template-columns: 1fr auto 1fr; align-items: center; padding: 0 3px 4px; }
.comments { border-top: 0; }
.comments span { padding-left: 14px; }
.navbar { display: flex; align-items: center; gap: 6px; height: 18px; padding: 0 2px; background: #f2f2f2; }
.navbar .arrow { margin-left: 2px; }
.doc-label { display: flex; align-items: center; justify-content: flex-end; gap: 14px; padding-right: 7px; white-space: nowrap; }

/* Timeline */
.timeline { display: flex; height: 58px; padding: 7px 10px 0 8px; border-top: 1px solid #e8e8e8; }
.playback { display: flex; gap: 9px; height: 24px; }
.history { position: relative; display: grid; grid-template-columns: repeat(14, 1fr); grid-template-rows: 4px 15px 6px; width: 263px; margin-left: 14px; }
.history b { margin: 0 2px; }
.history b.six { grid-column: span 6; }
.history b.three { grid-column: span 3; }
.history b.two { grid-column: span 2; margin-right: 0; }
.history button { padding-top: 1px; }
.history::after { content: ""; grid-column: 1 / -1; grid-row: 3; margin: 1px 9px 0; border-bottom: 1px solid #bbb; background: repeating-linear-gradient(90deg, #ccc 0 1px, transparent 1px 19px); }
.marker { position: absolute; right: -6px; top: 0; width: 10px; height: 26px; }
.settings { height: 24px; margin-left: auto; }
```
